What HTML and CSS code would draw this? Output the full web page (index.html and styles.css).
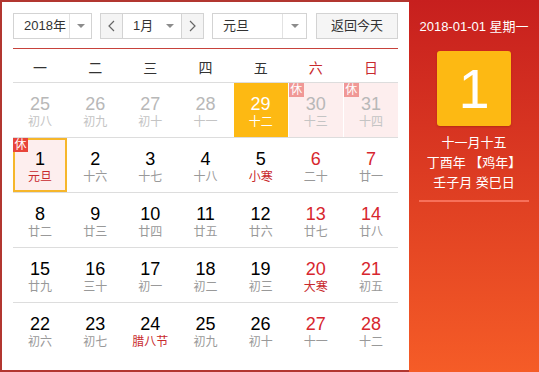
FILE: index.html
```html
<!DOCTYPE html>
<html lang="zh-CN">
<head>
    <meta charset="UTF-8">
    <title>万年历</title>
    <link rel="stylesheet" href="styles.css">
</head>
<body>
<div class="calendar">
    <div class="main">
        <div class="toolbar">
            <div class="select year">
                <span class="select-value">2018年</span>
                <span class="select-arrow"><i class="tri"></i></span>
            </div>
            <div class="month-group">
                <span class="nav-btn">
                    <svg width="7" height="12" viewBox="0 0 7 12"><polyline points="6,1 1,6 6,11" fill="none" stroke="#666" stroke-width="1.2"/></svg>
                </span>
                <div class="month">
                    <span class="select-value">1月</span>
                    <i class="tri"></i>
                </div>
                <span class="nav-btn">
                    <svg width="7" height="12" viewBox="0 0 7 12"><polyline points="1,1 6,6 1,11" fill="none" stroke="#666" stroke-width="1.2"/></svg>
                </span>
            </div>
            <div class="select holiday">
                <span class="select-value">元旦</span>
                <span class="select-arrow"><i class="tri"></i></span>
            </div>
            <span class="today-btn">返回今天</span>
        </div>

        <div class="table">
            <div class="head">
                <span>一</span><span>二</span><span>三</span><span>四</span><span>五</span>
                <span class="weekend">六</span><span class="weekend">日</span>
            </div>

            <div class="row">
                <div class="day other"><span class="num">25</span><span class="lunar">初八</span></div>
                <div class="day other"><span class="num">26</span><span class="lunar">初九</span></div>
                <div class="day other"><span class="num">27</span><span class="lunar">初十</span></div>
                <div class="day other"><span class="num">28</span><span class="lunar">十一</span></div>
                <div class="day hover"><span class="num">29</span><span class="lunar">十二</span></div>
                <div class="day other off"><span class="rest">休</span><span class="num">30</span><span class="lunar">十三</span></div>
                <div class="day other off"><span class="rest">休</span><span class="num">31</span><span class="lunar">十四</span></div>
            </div>

            <div class="row">
                <div class="day off selected"><span class="rest">休</span><span class="num">1</span><span class="lunar fest">元旦</span></div>
                <div class="day"><span class="num">2</span><span class="lunar">十六</span></div>
                <div class="day"><span class="num">3</span><span class="lunar">十七</span></div>
                <div class="day"><span class="num">4</span><span class="lunar">十八</span></div>
                <div class="day"><span class="num">5</span><span class="lunar fest">小寒</span></div>
                <div class="day weekend"><span class="num">6</span><span class="lunar">二十</span></div>
                <div class="day weekend"><span class="num">7</span><span class="lunar">廿一</span></div>
            </div>

            <div class="row">
                <div class="day"><span class="num">8</span><span class="lunar">廿二</span></div>
                <div class="day"><span class="num">9</span><span class="lunar">廿三</span></div>
                <div class="day"><span class="num">10</span><span class="lunar">廿四</span></div>
                <div class="day"><span class="num">11</span><span class="lunar">廿五</span></div>
                <div class="day"><span class="num">12</span><span class="lunar">廿六</span></div>
                <div class="day weekend"><span class="num">13</span><span class="lunar">廿七</span></div>
                <div class="day weekend"><span class="num">14</span><span class="lunar">廿八</span></div>
            </div>

            <div class="row">
                <div class="day"><span class="num">15</span><span class="lunar">廿九</span></div>
                <div class="day"><span class="num">16</span><span class="lunar">三十</span></div>
                <div class="day"><span class="num">17</span><span class="lunar">初一</span></div>
                <div class="day"><span class="num">18</span><span class="lunar">初二</span></div>
                <div class="day"><span class="num">19</span><span class="lunar">初三</span></div>
                <div class="day weekend"><span class="num">20</span><span class="lunar fest">大寒</span></div>
                <div class="day weekend"><span class="num">21</span><span class="lunar">初五</span></div>
            </div>

            <div class="row">
                <div class="day"><span class="num">22</span><span class="lunar">初六</span></div>
                <div class="day"><span class="num">23</span><span class="lunar">初七</span></div>
                <div class="day"><span class="num">24</span><span class="lunar fest">腊八节</span></div>
                <div class="day"><span class="num">25</span><span class="lunar">初九</span></div>
                <div class="day"><span class="num">26</span><span class="lunar">初十</span></div>
                <div class="day weekend"><span class="num">27</span><span class="lunar">十一</span></div>
                <div class="day weekend"><span class="num">28</span><span class="lunar">十二</span></div>
            </div>
        </div>
    </div>

    <div class="side">
        <div class="side-date">2018-01-01 星期一</div>
        <div class="big-day">1</div>
        <div class="side-lunar">十一月十五</div>
        <div class="side-lunar">丁酉年 【鸡年】</div>
        <div class="side-lunar">壬子月 癸巳日</div>
        <div class="side-line"></div>
    </div>
</div>
</body>
</html>
```

FILE: styles.css
```css
body {
    margin: 0;
    font-family: "Liberation Sans", "Noto Sans CJK SC", sans-serif;
    color: #333;
}
.calendar {
    display: flex;
    width: 539px;
    height: 372px;
}
.main {
    width: 409px;
    box-sizing: border-box;
    border: 2px solid #b23630;
    border-right: 0;
    padding: 11px 11px 0;
    background: #fff;
}

/* toolbar */
.toolbar {
    display: flex;
    gap: 8px;
    height: 26px;
    margin-bottom: 9px;
    font-size: 13px;
}
.select {
    display: flex;
    border: 1px solid #d3d3d3;
    box-sizing: border-box;
    background: #fff;
}
.select-value {
    padding-left: 10px;
    line-height: 24px;
}
.select-arrow {
    display: flex;
    align-items: center;
    justify-content: center;
    border-left: 1px solid #e2e2e2;
}
.tri {
    display: block;
    width: 0;
    height: 0;
    border-left: 4px solid transparent;
    border-right: 4px solid transparent;
    border-top: 4px solid #8c8c8c;
}
.year .select-value {
    width: 45px;
}
.year .select-arrow {
    width: 21px;
}
.holiday .select-value {
    width: 59px;
}
.holiday .select-arrow {
    width: 23px;
}
.month-group {
    display: flex;
    border: 1px solid #d3d3d3;
    box-sizing: border-box;
}
.nav-btn {
    display: flex;
    align-items: center;
    justify-content: center;
    width: 21px;
    background: #f4f4f4;
}
.month {
    display: flex;
    align-items: center;
    width: 60px;
    box-sizing: border-box;
    border-left: 1px solid #d3d3d3;
    border-right: 1px solid #d3d3d3;
}
.month .select-value {
    width: 33px;
}
.today-btn {
    margin-left: auto;
    width: 82px;
    box-sizing: border-box;
    border: 1px solid #d3d3d3;
    background: #f5f5f5;
    text-align: center;
    line-height: 24px;
}

/* table */
.table {
    border-top: 1px solid #c7423b;
}
.head {
    display: grid;
    grid-template-columns: repeat(7, 1fr);
    column-gap: 1px;
    height: 34px;
    padding-top: 2px;
    box-sizing: border-box;
    align-items: center;
    text-align: center;
    font-size: 14px;
    border-bottom: 1px solid #ddd;
}
.head .weekend {
    color: #c8292d;
}
.row {
    display: grid;
    grid-template-columns: repeat(7, 1fr);
    column-gap: 1px;
    border-bottom: 1px solid #ddd;
}
.row:last-child {
    border-bottom: 0;
}
.day {
    position: relative;
    height: 54px;
    box-sizing: border-box;
    padding-top: 11px;
    text-align: center;
}
.num {
    display: block;
    font-size: 18px;
    line-height: 20px;
    color: #000;
}
.lunar {
    display: block;
    font-size: 12px;
    line-height: 16px;
    color: #999;
}
.lunar.fest {
    color: #c8292d;
}
.weekend .num {
    color: #d7262e;
}
.other .num {
    color: #b8b8b8;
}
.other .lunar {
    color: #c4c4c4;
}
.off {
    background: #fdeeee;
}
.hover {
    background: #fdb913;
}
.hover .num,
.hover .lunar {
    color: #fff;
}
.selected {
    box-shadow: inset 0 0 0 2px #f6b62b;
}
.rest {
    position: absolute;
    top: 0;
    left: 0;
    width: 15px;
    height: 14px;
    line-height: 14px;
    font-size: 12px;
    color: #fff;
    background: #e8443a;
}
.other .rest {
    background: #f09896;
}

/* side panel */
.side {
    width: 130px;
    height: 372px;
    background: linear-gradient(#c71f1e, #f55c27);
    color: #fff;
    text-align: center;
    padding-top: 18px;
    box-sizing: border-box;
}
.side-date {
    font-size: 13px;
    line-height: 18px;
}
.big-day {
    width: 74px;
    height: 75px;
    margin: 15px auto 7px;
    background: #fdb913;
    border-radius: 3px;
    box-shadow: 0 1px 2px rgba(120, 20, 0, 0.35);
    font-size: 56px;
    line-height: 75px;
}
.side-lunar {
    font-size: 13px;
    line-height: 20px;
}
.side-line {
    width: 110px;
    height: 2px;
    margin: 7px auto 0;
    background: #f7705a;
}
```
